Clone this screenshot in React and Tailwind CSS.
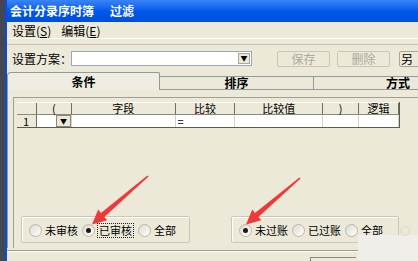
import React from 'react'

const cols = [
  { w: 'w-[20px]', t: '' },
  { w: 'w-[35px]', t: '(' },
  { w: 'w-[104px]', t: '字段' },
  { w: 'w-[60px]', t: '比较' },
  { w: 'w-[88px]', t: '比较值' },
  { w: 'w-[36px]', t: ')' },
  { w: 'w-[40px]', t: '逻辑' },
]

function Radio({ on, label, focus }) {
  return (
    <div className="flex items-center">
      <span className="w-[13px] h-[13px] rounded-full border border-[#b9b7ab] bg-gradient-to-br from-[#dcdad0] to-white flex items-center justify-center">
        {on && <span className="w-[5px] h-[5px] rounded-full bg-[#1a1a1a]" />}
      </span>
      <span className={focus ? 'ml-[2px] px-[1px] py-[1px] border border-dotted border-[#222] text-[11px]' : 'ml-[3px] py-[2px] text-[11px]'}>{label}</span>
    </div>
  )
}

function Group({ items, className }) {
  return (
    <div className={'h-[27px] border border-[#cbc8b9] rounded-[2px] shadow-[inset_1px_1px_0_#fff] flex items-center pl-[7px] pt-[2px] gap-[4px] ' + className}>
      {items.map((it) => (
        <Radio key={it.label} {...it} />
      ))}
    </div>
  )
}

export default function App() {
  return (
    <div className="relative w-[418px] h-[261px] overflow-hidden flex bg-[#45474f] text-[12px] leading-none text-black whitespace-nowrap font-['Noto_Sans_CJK_SC',sans-serif]">
      <div className="ml-[5px] flex-1 flex flex-col border-l-[2px] border-[#0b4bd6] bg-[#ece9d8]">
        {/* title bar */}
        <div className="h-[22px] shrink-0 flex items-center pl-[3px] bg-gradient-to-b from-[#3a84f6] via-[#0058ec] to-[#004ed8] text-white font-bold text-[12px]">
          <span>会计分录序时簿</span>
          <span className="ml-[16px]">过滤</span>
        </div>

        {/* menu */}
        <div className="h-[16px] shrink-0 flex items-center pl-[5px] gap-[10px] pt-[2px]">
          <span>设置(<u>S</u>)</span>
          <span>编辑(<u>E</u>)</span>
        </div>
        <div className="h-[7px] shrink-0 border-t border-white border-b border-b-[#c5c2b2]" />

        {/* toolbar */}
        <div className="h-[27px] shrink-0 flex items-center">
          <span className="ml-[5px] w-[59px] shrink-0">设置方案：</span>
          <div className="w-[181px] shrink-0 h-[15px] border border-[#9aa7b4] bg-white flex justify-end items-center pr-[1px]">
            <span className="w-[12px] h-[11px] bg-[#ece9d8] border border-[#a9a698] flex items-center justify-center text-[7px]">▼</span>
          </div>
          <button className="ml-[25px] shrink-0 w-[53px] h-[16px] border border-[#c9c6b7] rounded-[2px] text-[#aca899] bg-[#ece9d8]">保存</button>
          <button className="ml-[7px] shrink-0 w-[53px] h-[16px] border border-[#c9c6b7] rounded-[2px] text-[#aca899] bg-[#ece9d8]">删除</button>
          <button className="ml-[9px] shrink-0 w-[53px] h-[16px] border border-[#a9a698] rounded-[2px] bg-[#ece9d8] text-left pl-[1px]">另</button>
        </div>

        {/* tabs */}
        <div className="h-[18px] shrink-0 flex items-end">
          <div className="w-[153px] shrink-0 h-[18px] border border-b-0 border-[#919b9c] rounded-tl-[4px] rounded-tr-[2px] bg-[#efede2] flex items-center justify-center font-bold">条件</div>
          <div className="w-[154px] shrink-0 h-[14px] border-t border-r border-b border-[#919b9c] flex items-center justify-center font-bold">排序</div>
          <div className="w-[154px] h-[14px] shrink-0 border-t border-b border-[#919b9c] flex items-center justify-center font-bold pl-[14px]">方式</div>
        </div>

        {/* panel */}
        <div className="h-[158px] shrink-0 border-l border-[#919b9c] pl-[5px] pt-[7px] flex">
          <div className="flex-1 border-l border-t border-[#a19f92] pl-[3px] pt-[4px] flex flex-col">
            {/* grid */}
            <div className="w-[383px] border-r border-b border-[#5d5b52]">
              <div className="flex h-[12px] bg-[#ece9d8] border-t border-white">
                {cols.map((c, i) => (
                  <div key={i} className={c.w + ' h-full border-r border-[#6f6d64] flex items-center justify-center text-[11px]'}>{c.t}</div>
                ))}
              </div>
              <div className="flex h-[13px] bg-white border-t border-[#8a887d]">
                {cols.map((c, i) =>
                  i === 0 ? (
                    <div key={i} className={c.w + ' h-full bg-[#ece9d8] border-r border-[#6f6d64] flex items-center pl-[6px] text-[11px]'}>1</div>
                  ) : (
                    <div key={i} className={c.w + ' h-full border-r border-[#d6d3c6] flex items-center pl-[2px] text-[11px]'}>
                      {i === 1 && <span className="ml-auto w-[15px] h-full bg-[#ece9d8] border border-[#8a887d] flex items-center justify-center text-[7px]">▼</span>}
                      {i === 3 && '='}
                    </div>
                  )
                )}
              </div>
            </div>

            <div className="flex-1" />

            <div className="flex pb-[5px]">
              <Group
                className="ml-[4px] w-[169px] shrink-0"
                items={[{ label: '未审核' }, { label: '已审核', on: true, focus: true }, { label: '全部' }]}
              />
              <Group
                className="ml-[41px] w-[168px] shrink-0"
                items={[{ label: '未过账', on: true }, { label: '已过账' }, { label: '全部' }]}
              />
            </div>
          </div>
        </div>

        {/* bottom */}
        <div className="h-[2px] shrink-0" />
        <div className="flex-1 border-t border-[#9d9b90] shadow-[inset_0_1px_0_#fff] relative">
          <div className="absolute left-[303px] top-[6px] w-[46px] h-[10px] border-t border-l border-[#8a887d]" />
        </div>
      </div>

      {/* watermark patch */}
      <div className="absolute left-[358px] top-[235px] w-[60px] h-[26px] bg-[#efeee8]" />
      <div className="absolute left-[400px] top-[226px] w-[10px] h-[10px] rounded-full border border-[#dcdad0]" />

      {/* red annotation arrows */}
      <svg className="absolute inset-0 pointer-events-none" width="418" height="261" viewBox="0 0 418 261">
        <polygon fill="#f0393a" points="148.6,176.6 104.4,216.9 107.2,220.3 92,224.5 98.2,209.6 100.9,212.9 147.4,175.4" />
        <polygon fill="#f0393a" points="300.6,178.6 258.5,216.9 261.3,220.3 246,224.5 252.3,209.6 255,212.9 299.4,177.4" />
      </svg>
    </div>
  )
}
